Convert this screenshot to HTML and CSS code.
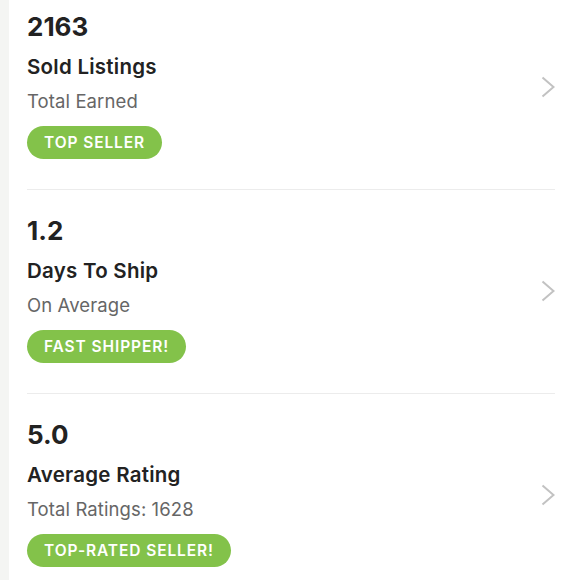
FILE: index.html
```html
<!DOCTYPE html>
<html lang="en">
<head>
  <meta charset="UTF-8">
  <meta name="viewport" content="width=device-width, initial-scale=1">
  <title>Seller Stats</title>
  <link rel="stylesheet" href="styles.css">
</head>
<body>

  <div class="page">
    <div class="stats">

      <div class="stat">
        <div class="stat-info">
          <div class="stat-value">2163</div>
          <div class="stat-title">Sold Listings</div>
          <div class="stat-sub">Total Earned</div>
          <span class="badge">TOP SELLER</span>
        </div>
        <svg class="chevron" viewBox="0 0 14 22" width="14" height="22"><path d="M1.5 1.5 L12.5 11 L1.5 20.5"/></svg>
      </div>

      <div class="stat">
        <div class="stat-info">
          <div class="stat-value">1.2</div>
          <div class="stat-title">Days To Ship</div>
          <div class="stat-sub">On Average</div>
          <span class="badge">FAST SHIPPER!</span>
        </div>
        <svg class="chevron" viewBox="0 0 14 22" width="14" height="22"><path d="M1.5 1.5 L12.5 11 L1.5 20.5"/></svg>
      </div>

      <div class="stat">
        <div class="stat-info">
          <div class="stat-value">5.0</div>
          <div class="stat-title">Average Rating</div>
          <div class="stat-sub">Total Ratings: 1628</div>
          <span class="badge">TOP-RATED SELLER!</span>
        </div>
        <svg class="chevron" viewBox="0 0 14 22" width="14" height="22"><path d="M1.5 1.5 L12.5 11 L1.5 20.5"/></svg>
      </div>

    </div>
  </div>

</body>
</html>
```

FILE: styles.css
```css
body {
  margin: 0;
  font-family: Inter, Lato, sans-serif;
  background: #f4f5f3;
  color: #222;
  overflow: hidden;
}
.page {
  margin-left: 9px;
  background: #fff;
  min-height: 580px;
}
.stats {
  margin-top: -14px;
  padding: 0 25px 0 18px;
}
.stat {
  display: flex;
  align-items: center;
  justify-content: space-between;
  padding: 24px 0 30px;
  border-bottom: 1px solid #ececec;
}
.stat-info {
  display: flex;
  flex-direction: column;
  align-items: flex-start;
}
.stat-value {
  font-size: 26px;
  font-weight: 700;
  line-height: 34px;
}
.stat-title {
  font-size: 20.5px;
  font-weight: 600;
  letter-spacing: 0.25px;
  line-height: 28px;
  margin-top: 9px;
}
.stat-sub {
  font-size: 18.5px;
  color: #666;
  letter-spacing: 0.1px;
  line-height: 24px;
  margin-top: 8px;
}
.badge {
  display: flex;
  align-items: center;
  height: 33px;
  margin-top: 13px;
  background: #83c24a;
  color: #fff;
  font-size: 15.5px;
  font-weight: 600;
  letter-spacing: 0.9px;
  padding: 0 17px;
  border-radius: 17px;
}
.chevron {
  fill: none;
  stroke: #c2c2c2;
  stroke-width: 2;
  margin-top: 4px;
}
```
